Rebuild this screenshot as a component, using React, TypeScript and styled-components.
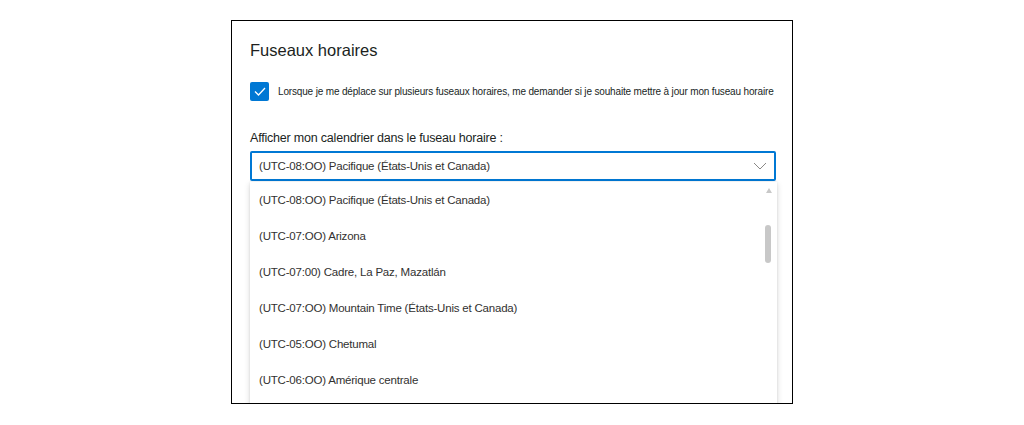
import React from "react";
import styled, { createGlobalStyle } from "styled-components";

const zones = [
  "(UTC-08:OO) Pacifique (États-Unis et Canada)",
  "(UTC-07:OO) Arizona",
  "(UTC-07:00) Cadre, La Paz, Mazatlán",
  "(UTC-07:OO) Mountain Time (États-Unis et Canada)",
  "(UTC-05:OO) Chetumal",
  "(UTC-06:OO) Amérique centrale",
];

const GlobalStyle = createGlobalStyle`
  body {
    margin: 0;
    background: #ffffff;
    font-family: "Liberation Sans", Arial, sans-serif;
    color: #201f1e;
  }
`;

const Frame = styled.div`
  box-sizing: border-box;
  width: 562px;
  height: 384px;
  margin: 20px auto 0;
  border: 1px solid #000000;
  padding: 19px 16px 0 18px;
  overflow: hidden;
`;

const Title = styled.h2`
  margin: 0;
  font-size: 16.5px;
  font-weight: 400;
  line-height: 20px;
  color: #201f1e;
`;

const CheckRow = styled.label`
  display: flex;
  align-items: center;
  gap: 9px;
  margin-top: 22px;
`;

const CheckBox = styled.span`
  width: 19px;
  height: 19px;
  border-radius: 2px;
  background: #0078d4;
  display: flex;
  align-items: center;
  justify-content: center;
  flex-shrink: 0;
`;

const CheckText = styled.span`
  font-size: 10px;
  letter-spacing: -0.16px;
  line-height: 14px;
  color: #201f1e;
  white-space: nowrap;
`;

const FieldLabel = styled.div`
  margin-top: 29px;
  font-size: 12.5px;
  letter-spacing: -0.2px;
  line-height: 16px;
  color: #201f1e;
`;

const Select = styled.div`
  box-sizing: border-box;
  margin-top: 5px;
  width: 526px;
  height: 30px;
  border: 2px solid #0078d4;
  border-radius: 2px;
  display: flex;
  align-items: center;
  justify-content: space-between;
  padding: 0 7px 0 7px;
  font-size: 11.5px;
  letter-spacing: -0.2px;
  color: #323130;
`;

const Dropdown = styled.div`
  position: relative;
  width: 527px;
  height: 250px;
  margin-top: 1px;
  background: #ffffff;
  box-shadow: 0 2px 6px rgba(0, 0, 0, 0.16), 0 0 2px rgba(0, 0, 0, 0.08);
`;

const Option = styled.div`
  height: 36px;
  display: flex;
  align-items: center;
  padding-left: 9px;
  font-size: 11.5px;
  letter-spacing: -0.2px;
  color: #323130;
  white-space: nowrap;
`;

const ScrollArrow = styled.span`
  position: absolute;
  top: 6px;
  right: 5px;
  width: 0;
  height: 0;
  border-left: 3.5px solid transparent;
  border-right: 3.5px solid transparent;
  border-bottom: 5px solid #c8c8c8;
`;

const ScrollThumb = styled.span`
  position: absolute;
  top: 43px;
  right: 6px;
  width: 6px;
  height: 38px;
  border-radius: 3px;
  background: #c8c8c8;
`;

const Chevron = () => (
  <svg width="14" height="8" viewBox="0 0 14 8" fill="none">
    <path d="M1 1l6 6 6-6" stroke="#8a8886" strokeWidth="1" />
  </svg>
);

export default function App() {
  return (
    <>
      <GlobalStyle />
      <Frame>
        <Title>Fuseaux horaires</Title>
        <CheckRow>
          <CheckBox>
            <svg width="12" height="9" viewBox="0 0 12 9" fill="none">
              <path d="M1 4.5l3.5 3.5L11 1" stroke="#ffffff" strokeWidth="1.3" />
            </svg>
          </CheckBox>
          <CheckText>
            Lorsque je me déplace sur plusieurs fuseaux horaires, me demander si je souhaite mettre à jour mon fuseau horaire
          </CheckText>
        </CheckRow>
        <FieldLabel>Afficher mon calendrier dans le fuseau horaire :</FieldLabel>
        <Select>
          <span>{zones[0]}</span>
          <Chevron />
        </Select>
        <Dropdown>
          {zones.map((z) => (
            <Option key={z}>{z}</Option>
          ))}
          <ScrollArrow />
          <ScrollThumb />
        </Dropdown>
      </Frame>
    </>
  );
}
